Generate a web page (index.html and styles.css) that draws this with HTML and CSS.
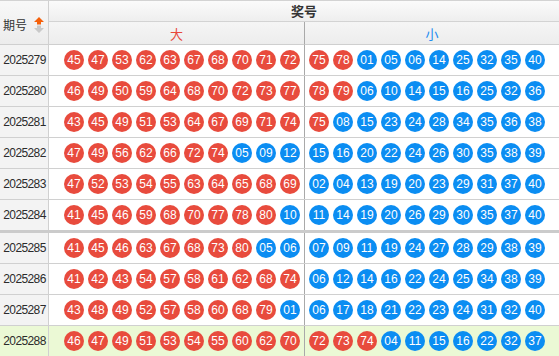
FILE: index.html
```html
<!DOCTYPE html>
<html lang="zh-CN">
<head>
<meta charset="utf-8">
<title>奖号</title>
<link rel="stylesheet" href="styles.css">
</head>
<body>
<div class="board">
  <div class="head">
    <div class="h-issue">
      <span>期号</span>
      <svg class="sort" width="10" height="16" viewBox="0 0 10 16"><polygon points="5,0 10,5 7,5 7,7.5 3,7.5 3,5 0,5" fill="#f5600a"/><polygon points="3,8.5 7,8.5 7,11 10,11 5,16 0,11 3,11" fill="#c9c9c9"/></svg>
    </div>
    <div class="h-prize">奖号</div>
    <div class="h-big">大</div>
    <div class="h-small">小</div>
  </div>

  <div class="row">
    <div class="issue">2025279</div>
    <div class="big"><i class="b r">45</i><i class="b r">47</i><i class="b r">53</i><i class="b r">62</i><i class="b r">63</i><i class="b r">67</i><i class="b r">68</i><i class="b r">70</i><i class="b r">71</i><i class="b r">72</i></div>
    <div class="small"><i class="b r">75</i><i class="b r">78</i><i class="b u">01</i><i class="b u">05</i><i class="b u">06</i><i class="b u">14</i><i class="b u">25</i><i class="b u">32</i><i class="b u">35</i><i class="b u">40</i></div>
  </div>
  <div class="row">
    <div class="issue">2025280</div>
    <div class="big"><i class="b r">46</i><i class="b r">49</i><i class="b r">50</i><i class="b r">59</i><i class="b r">64</i><i class="b r">68</i><i class="b r">70</i><i class="b r">72</i><i class="b r">73</i><i class="b r">77</i></div>
    <div class="small"><i class="b r">78</i><i class="b r">79</i><i class="b u">06</i><i class="b u">10</i><i class="b u">14</i><i class="b u">15</i><i class="b u">16</i><i class="b u">25</i><i class="b u">32</i><i class="b u">36</i></div>
  </div>
  <div class="row">
    <div class="issue">2025281</div>
    <div class="big"><i class="b r">43</i><i class="b r">45</i><i class="b r">49</i><i class="b r">51</i><i class="b r">53</i><i class="b r">64</i><i class="b r">67</i><i class="b r">69</i><i class="b r">71</i><i class="b r">74</i></div>
    <div class="small"><i class="b r">75</i><i class="b u">08</i><i class="b u">15</i><i class="b u">23</i><i class="b u">24</i><i class="b u">28</i><i class="b u">34</i><i class="b u">35</i><i class="b u">36</i><i class="b u">38</i></div>
  </div>
  <div class="row">
    <div class="issue">2025282</div>
    <div class="big"><i class="b r">47</i><i class="b r">49</i><i class="b r">56</i><i class="b r">62</i><i class="b r">66</i><i class="b r">72</i><i class="b r">74</i><i class="b u">05</i><i class="b u">09</i><i class="b u">12</i></div>
    <div class="small"><i class="b u">15</i><i class="b u">16</i><i class="b u">20</i><i class="b u">22</i><i class="b u">24</i><i class="b u">26</i><i class="b u">30</i><i class="b u">35</i><i class="b u">38</i><i class="b u">39</i></div>
  </div>
  <div class="row">
    <div class="issue">2025283</div>
    <div class="big"><i class="b r">47</i><i class="b r">52</i><i class="b r">53</i><i class="b r">54</i><i class="b r">55</i><i class="b r">63</i><i class="b r">64</i><i class="b r">65</i><i class="b r">68</i><i class="b r">69</i></div>
    <div class="small"><i class="b u">02</i><i class="b u">04</i><i class="b u">13</i><i class="b u">19</i><i class="b u">20</i><i class="b u">23</i><i class="b u">29</i><i class="b u">31</i><i class="b u">37</i><i class="b u">40</i></div>
  </div>
  <div class="row row-split">
    <div class="issue">2025284</div>
    <div class="big"><i class="b r">41</i><i class="b r">45</i><i class="b r">46</i><i class="b r">59</i><i class="b r">68</i><i class="b r">70</i><i class="b r">77</i><i class="b r">78</i><i class="b r">80</i><i class="b u">10</i></div>
    <div class="small"><i class="b u">11</i><i class="b u">14</i><i class="b u">19</i><i class="b u">20</i><i class="b u">26</i><i class="b u">29</i><i class="b u">30</i><i class="b u">35</i><i class="b u">37</i><i class="b u">40</i></div>
  </div>
  <div class="row">
    <div class="issue">2025285</div>
    <div class="big"><i class="b r">41</i><i class="b r">45</i><i class="b r">46</i><i class="b r">63</i><i class="b r">67</i><i class="b r">68</i><i class="b r">73</i><i class="b r">80</i><i class="b u">05</i><i class="b u">06</i></div>
    <div class="small"><i class="b u">07</i><i class="b u">09</i><i class="b u">11</i><i class="b u">19</i><i class="b u">24</i><i class="b u">27</i><i class="b u">28</i><i class="b u">29</i><i class="b u">38</i><i class="b u">39</i></div>
  </div>
  <div class="row">
    <div class="issue">2025286</div>
    <div class="big"><i class="b r">41</i><i class="b r">42</i><i class="b r">43</i><i class="b r">54</i><i class="b r">57</i><i class="b r">58</i><i class="b r">61</i><i class="b r">62</i><i class="b r">68</i><i class="b r">74</i></div>
    <div class="small"><i class="b u">06</i><i class="b u">12</i><i class="b u">14</i><i class="b u">16</i><i class="b u">22</i><i class="b u">24</i><i class="b u">25</i><i class="b u">34</i><i class="b u">38</i><i class="b u">39</i></div>
  </div>
  <div class="row">
    <div class="issue">2025287</div>
    <div class="big"><i class="b r">43</i><i class="b r">48</i><i class="b r">49</i><i class="b r">52</i><i class="b r">57</i><i class="b r">58</i><i class="b r">60</i><i class="b r">68</i><i class="b r">79</i><i class="b u">01</i></div>
    <div class="small"><i class="b u">06</i><i class="b u">17</i><i class="b u">18</i><i class="b u">21</i><i class="b u">22</i><i class="b u">23</i><i class="b u">24</i><i class="b u">31</i><i class="b u">32</i><i class="b u">40</i></div>
  </div>
  <div class="row row-hl">
    <div class="issue">2025288</div>
    <div class="big"><i class="b r">46</i><i class="b r">47</i><i class="b r">49</i><i class="b r">51</i><i class="b r">53</i><i class="b r">54</i><i class="b r">55</i><i class="b r">60</i><i class="b r">62</i><i class="b r">70</i></div>
    <div class="small"><i class="b r">72</i><i class="b r">73</i><i class="b r">74</i><i class="b u">04</i><i class="b u">11</i><i class="b u">15</i><i class="b u">16</i><i class="b u">22</i><i class="b u">32</i><i class="b u">37</i></div>
  </div>
</div>
</body>
</html>
```

FILE: styles.css
```css
* { box-sizing: border-box; }
html, body { margin: 0; padding: 0; background: #fff; }
body {
  font-family: "Liberation Sans", "Noto Sans CJK SC", sans-serif;
  color: #333;
  overflow: hidden;
}
.board {
  width: 559px;
  border-top: 1px solid #d3d3d3;
}
.head {
  display: grid;
  grid-template-columns: 49px 256px 254px;
  grid-template-rows: 21px 23px;
}
.h-issue {
  grid-row: 1 / 3;
  grid-column: 1;
  border-right: 1px solid #d0d0d0;
  border-bottom: 1px solid #cfcfcf;
  background: linear-gradient(#f8f8f8, #ececec);
  display: flex;
  align-items: center;
  justify-content: center;
  gap: 7px;
  padding-top: 4px;
  padding-right: 1px;
  font-family: "Noto Sans CJK SC", sans-serif;
  font-size: 12px;
  color: #333;
}
.sort { display: block; margin-top: 1px; }
.h-prize {
  grid-column: 2 / 4;
  grid-row: 1;
  border-bottom: 1px solid #d3d3d3;
  background: linear-gradient(#fbfbfb, #eeeeee);
  display: flex;
  align-items: center;
  justify-content: center;
  font-family: "Noto Sans CJK SC", sans-serif;
  font-weight: bold;
  font-size: 13px;
  color: #333;
  padding-bottom: 1px;
}
.h-big, .h-small {
  grid-row: 2;
  border-bottom: 1px solid #cfcfcf;
  background: linear-gradient(#f5f5f5, #ededed);
  display: flex;
  align-items: center;
  justify-content: center;
  font-family: "Noto Sans CJK SC", sans-serif;
  font-size: 13px;
  padding-top: 1px;
}
.h-big { border-right: 1px solid #a9a9a9; color: #e8483b; }
.h-small { color: #1f8cf0; }

.row {
  display: grid;
  grid-template-columns: 49px 256px 254px;
  height: 31px;
  border-bottom: 1px solid #d0d0d0;
}
.row-split {
  height: 33px;
  border-bottom: 3px solid #cbcbcb;
}
.row-hl { height: 30px; border-bottom: none; background: #ebf9d5; }
.issue {
  background: #f3f3f3;
  border-right: 1px solid #d0d0d0;
  display: flex;
  align-items: center;
  justify-content: center;
  font-size: 12px;
  letter-spacing: -0.6px;
  color: #2b2b2b;
  padding-left: 1px;
}
.row-hl .issue { background: #ebf9d5; }
.big, .small {
  display: flex;
  align-items: center;
  gap: 4px;
}
.big { padding-left: 15px; border-right: 1px solid #a9a9a9; }
.small { padding-left: 4px; }
.b {
  display: block;
  width: 20px;
  height: 20px;
  border-radius: 50%;
  font-style: normal;
  font-size: 12px;
  line-height: 20px;
  text-align: center;
  color: #fff;
}
.r { background: #e84b3d; }
.u { background: #0b8df2; }
```
